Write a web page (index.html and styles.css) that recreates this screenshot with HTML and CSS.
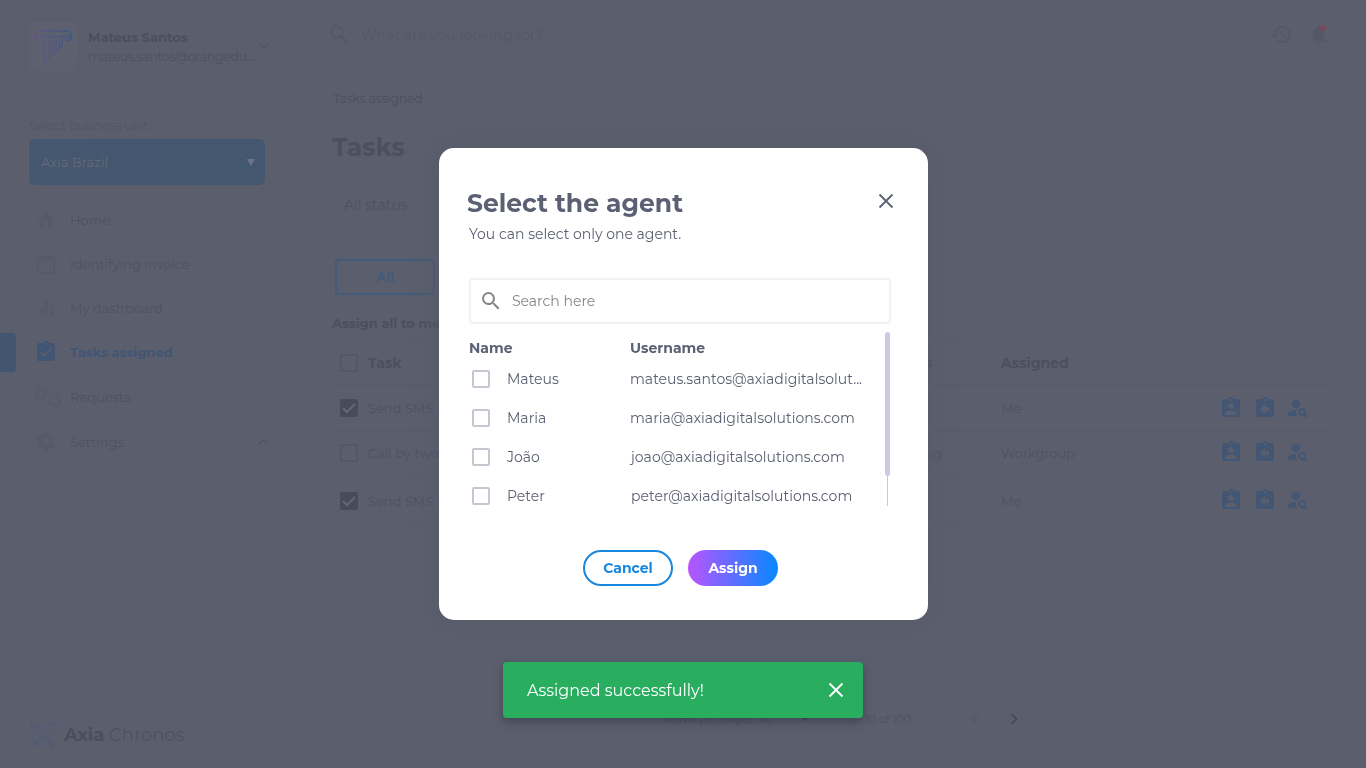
FILE: index.html
```html
<!DOCTYPE html>
<html lang="en">
<head>
<meta charset="utf-8">
<title>Axia Chronos - Tasks</title>
<link rel="stylesheet" href="styles.css">
</head>
<body>
<svg class="defs" width="0" height="0" aria-hidden="true">
  <defs>
    <linearGradient id="brand" gradientUnits="userSpaceOnUse" x1="0" x2="38" y1="0" y2="0"><stop offset="0" stop-color="#67557f"/><stop offset="1" stop-color="#425b7c"/></linearGradient>
    <linearGradient id="blades" gradientUnits="userSpaceOnUse" x1="0" x2="0" y1="27" y2="0"><stop offset="0" stop-color="#455c7a"/><stop offset="1" stop-color="#555279"/></linearGradient>
    <symbol id="search" viewBox="0 0 24 24"><path d="M15.5 14h-.79l-.28-.27A6.47 6.47 0 0 0 16 9.5 6.5 6.5 0 1 0 9.5 16c1.61 0 3.09-.59 4.23-1.57l.27.28v.79l5 4.99L20.49 19l-4.99-5zm-6 0C7.01 14 5 11.99 5 9.5S7.01 5 9.5 5 14 7.01 14 9.5 11.99 14 9.5 14z"/></symbol>
    <symbol id="close" viewBox="0 0 24 24"><path d="m5.500 5.500 13 13m0-13-13 13" fill="none" stroke="currentColor" stroke-width="1.800"/></symbol>
    <symbol id="profile-board" viewBox="0 0 24 24"><path d="M19 3h-4.180C14.400 1.840 13.300 1 12 1s-2.400.840-2.820 2H5c-1.100 0-2 .900-2 2v14c0 1.100.900 2 2 2h14c1.100 0 2-.900 2-2V5c0-1.100-.900-2-2-2zm-7 0c.550 0 1 .450 1 1s-.450 1-1 1-1-.450-1-1 .450-1 1-1zm0 4c1.660 0 3 1.340 3 3s-1.340 3-3 3-3-1.340-3-3 1.340-3 3-3zm6 12H6v-1.400c0-2 4-3.100 6-3.100s6 1.100 6 3.100V19z"/></symbol>
    <symbol id="return-board" viewBox="0 0 24 24"><path d="M19 3h-4.180C14.400 1.840 13.300 1 12 1s-2.400.840-2.820 2H5c-1.100 0-2 .900-2 2v14c0 1.100.900 2 2 2h14c1.100 0 2-.900 2-2V5c0-1.100-.900-2-2-2zm-7 0c.550 0 1 .450 1 1s-.450 1-1 1-1-.450-1-1 .450-1 1-1zm4 12h-4v3l-5-5 5-5v3h4v4z"/></symbol>
    <symbol id="person-search" viewBox="0 0 24 24"><circle cx="10" cy="8" r="4"/><path d="M10.350 14.010C7.620 13.910 2 15.270 2 18v2h9.540c-2.470-2.760-1.230-5.890-1.190-5.990zM19.430 18.020C19.790 17.430 20 16.740 20 16c0-2.210-1.790-4-4-4s-4 1.790-4 4 1.790 4 4 4c.740 0 1.430-.220 2.020-.570L20.590 22 22 20.590l-2.570-2.570zM16 18c-1.100 0-2-.900-2-2s.900-2 2-2 2 .900 2 2-.900 2-2 2z"/></symbol>
    <symbol id="row-check" viewBox="0 0 18 18"><path d="m3 9 4 4 8-8" fill="none" stroke="currentColor" stroke-width="2"/></symbol>
  </defs>
</svg>
<div class="app">
  <aside class="sidebar">
    <div class="profile">
      <div class="avatar">
        <svg width="40" height="34" viewBox="0 0 40 34"><g fill="none" stroke="url(#brand)" stroke-width="1.800" stroke-linejoin="round"><path d="M8 10.500a2.600 2.600 0 1 1-1.300-4.200c1.800.6 2.400 2.700 1.300 4.200C6 13.200 1.500 11.300 1.500 7.300 1.500 4 4 2 7 2h26c3 0 5.500 2 5.500 5.300 0 4-4.500 5.900-6.500 3.200-1.100-1.500-.5-3.600 1.300-4.200a2.600 2.600 0 1 1-1.300 4.200"/><path d="M8.500 7.500h23M11.500 12v21l5-4.500V14c0-2.500 3-2.500 3 0v11.500l3.500-3V14c0-2.500 3-2.500 3 0v6l3-3V9.500"/></g></svg>
      </div>
      <div class="who"><div class="who-name">Mateus Santos</div><div class="who-mail">mateus.santos@orangedu...</div></div>
      <svg class="who-arrow" width="10" height="8" viewBox="0 0 10 8"><path d="m1 1.500 4 4 4-4"/></svg>
    </div>
    <label class="unit-label">Select business unit</label>
    <div class="unit"><span>Axia Brazil</span><i></i></div>
    <nav class="nav">
      <a class="home"><svg width="22" height="22" viewBox="0 0 24 24"><path d="M10 20v-6h4v6h5v-8h3L12 3 2 12h3v8z"/></svg><span>Home</span></a>
      <a class="invoice"><svg width="24" height="24" viewBox="0 0 24 24"><path d="M19 4h-1V2h-2v2H8V2H6v2H5c-1.100 0-2 .9-2 2v14c0 1.100.9 2 2 2h14c1.100 0 2-.9 2-2V6c0-1.100-.9-2-2-2zm0 16H5V9h14v11zM7 11h2v2H7zm4 0h2v2h-2zm4 0h2v2h-2z"/></svg><span>Identifying invoice</span></a>
      <a class="dash"><svg width="22" height="22" viewBox="0 0 24 24"><path d="M4 12h4v8H4zM10 4h4v16h-4zM16 9h4v11h-4z"/></svg><span>My dashboard</span></a>
      <a class="active"><svg width="24" height="24" viewBox="0 0 24 24"><path d="M19 3h-4.180C14.400 1.840 13.300 1 12 1s-2.400.84-2.820 2H5c-1.100 0-2 .9-2 2v14c0 1.100.9 2 2 2h14c1.100 0 2-.9 2-2V5c0-1.100-.9-2-2-2zm-7 0c.55 0 1 .45 1 1s-.45 1-1 1-1-.45-1-1 .45-1 1-1z"/><path class="tick" d="m7 12.500 3.300 3.300L17.500 8.500"/></svg><span>Tasks assigned</span></a>
      <a class="requests"><svg class="wide" width="26" height="24" viewBox="0 0 26 24" fill="none" stroke="currentColor" stroke-width="1.700"><path d="M1.500 4.500 5.500 1v3.500h6.500l-3 8H1.500zM24.500 19.500l-4 3.500v-3.500H14l3-8h7.500z"/></svg><span>Requests</span></a>
      <a class="settings"><svg width="24" height="24" viewBox="0 0 24 24"><path d="M19.140 12.940c.04-.3.060-.61.060-.94 0-.32-.02-.64-.07-.94l2.030-1.580a.49.49 0 0 0 .12-.61l-1.920-3.320a.49.49 0 0 0-.59-.22l-2.390.96c-.5-.38-1.030-.7-1.620-.94l-.36-2.540a.48.48 0 0 0-.48-.41h-3.840a.47.47 0 0 0-.47.41l-.36 2.540c-.59.24-1.130.57-1.620.94l-2.390-.96a.48.48 0 0 0-.59.22L2.740 8.870a.47.47 0 0 0 .12.610l2.030 1.580a6.500 6.500 0 0 0 0 1.880l-2.030 1.580a.49.49 0 0 0-.12.610l1.920 3.320c.12.220.37.290.59.220l2.390-.96c.5.380 1.030.700 1.620.940l.36 2.540c.05.240.24.410.48.410h3.840c.24 0 .44-.17.470-.41l.36-2.540c.59-.24 1.130-.56 1.620-.94l2.390.96c.22.080.47 0 .59-.22l1.920-3.320a.47.47 0 0 0-.12-.61zM12 15.600A3.600 3.600 0 1 1 12 8.400a3.600 3.600 0 0 1 0 7.200z"/></svg><span>Settings</span><svg class="up" width="10" height="8" viewBox="0 0 10 8"><path d="m1 6 4-4 4 4"/></svg></a>
    </nav>
    <div class="brand">
      <svg width="27" height="27" viewBox="0 0 27 27"><path fill="none" stroke="url(#blades)" stroke-width=".9" d="m1 1 7 1 5 5M1 1l2 7 14 12M8 4l12 13M4 4l14 14M26 1l-7 1-5 5M26 1l-2 7-6 5M23 4l-7 7M11 14l-5 5M13 16l-4 4M3 17l7 7M20 16l-5 5M24 17l-7 7M18 20l6 5M20 19l5 5M9 20l-6 5M7 19l-5 5M1 23l3 3M26 23l-3 3"/></svg>
      <span><b>Axia</b> Chronos</span>
    </div>
  </aside>
  <main class="main">
    <header class="topbar">
      <div class="top-search"><svg width="25" height="25"><use href="#search"/></svg><span>What are you looking for?</span></div>
      <svg class="history" width="21" height="21" viewBox="1 2 22 20"><path d="M13 3a9 9 0 0 0-9 9H1l3.890 3.890.070.140L9 12H6c0-3.870 3.130-7 7-7s7 3.130 7 7-3.130 7-7 7c-1.930 0-3.680-.79-4.940-2.060l-1.420 1.420A9 9 0 1 0 13 3zm-1 5v5l4.280 2.540.72-1.210-3.500-2.080V8z"/></svg>
      <div class="bell"><svg width="23" height="23" viewBox="0 0 24 24"><path d="M12 22c1.100 0 2-.9 2-2h-4c0 1.100.9 2 2 2zm6-6v-5c0-3.070-1.630-5.640-4.500-6.320V4a1.500 1.500 0 0 0-3 0v.68C7.640 5.360 6 7.920 6 11v5l-2 2v1h16v-1z"/></svg><i></i></div>
    </header>
    <div class="crumb">Tasks assigned</div>
    <h1>Tasks</h1>
    <div class="status-filter">All status</div>
    <button class="tab">All</button>
    <div class="assign-all">Assign all to me</div>
    <section class="table">
      <div class="row head"><i class="box"></i><span class="task">Task</span><span>Status</span><span>Assigned</span></div>
      <div class="row r1"><i class="box on"><svg><use href="#row-check"/></svg></i><span class="task">Send SMS reminder</span><span>Open</span><span>Me</span><div class="acts"><svg><use href="#profile-board"/></svg><svg><use href="#return-board"/></svg><svg><use href="#person-search"/></svg></div></div>
      <div class="row r2"><i class="box"></i><span class="task">Call by two</span><span>Pending</span><span>Workgroup</span><div class="acts"><svg><use href="#profile-board"/></svg><svg><use href="#return-board"/></svg><svg><use href="#person-search"/></svg></div></div>
      <div class="row r3"><i class="box on"><svg><use href="#row-check"/></svg></i><span class="task">Send SMS reminder</span><span>Open</span><span>Me</span><div class="acts"><svg><use href="#profile-board"/></svg><svg><use href="#return-board"/></svg><svg><use href="#person-search"/></svg></div></div>
    </section>
    <footer class="pager"><span class="per">Items per page:</span><span class="count">10</span><i></i><span class="range">1 - 10 of 100</span><svg class="prev" width="8" height="12" viewBox="0 0 8 12"><path d="M6.500 1 1.500 6l5 5"/></svg><svg class="next" width="8" height="12" viewBox="0 0 8 12"><path d="m1.500 1 5 5-5 5"/></svg></footer>
  </main>
</div>
<div class="overlay">
  <div class="modal" role="dialog">
    <div class="modal-head"><div><h2>Select the agent</h2><p>You can select only one agent.</p></div><svg class="x" width="24" height="24"><use href="#close"/></svg></div>
    <div class="field"><svg width="24" height="24"><use href="#search"/></svg><span>Search here</span></div>
    <div class="agents">
      <div class="list">
        <div class="agent titles"><b>Name</b><b>Username</b></div>
        <div class="agent"><i></i><span>Mateus</span><span>mateus.santos@axiadigitalsolut...</span></div>
        <div class="agent"><i></i><span>Maria</span><span>maria@axiadigitalsolutions.com</span></div>
        <div class="agent"><i></i><span>João</span><span class="inset">joao@axiadigitalsolutions.com</span></div>
        <div class="agent"><i></i><span>Peter</span><span class="inset">peter@axiadigitalsolutions.com</span></div>
      </div>
      <div class="scroll"><div class="thumb"></div><div class="track"></div></div>
    </div>
    <div class="buttons"><button class="cancel">Cancel</button><button class="assign">Assign</button></div>
  </div>
</div>
<div class="toast"><span>Assigned successfully!</span><svg width="24" height="24"><use href="#close"/></svg></div>
</body>
</html>
```
FILE: styles.css
```css
* { box-sizing: border-box; }
body { margin: 0; width: 1366px; height: 768px; overflow: hidden; background: #5b5f6d; font-family: "Montserrat", "Inter", sans-serif; font-size: 14px; color: #4c4f5e; }
h1, h2, p { margin: 0; }
button { font-family: inherit; padding: 0; }
svg { display: block; flex: none; fill: currentColor; }
.defs { position: absolute; }
.app { display: flex; height: 768px; }
.sidebar { width: 294px; padding: 22px 28px 0 29px; border-right: 1px solid #565a69; display: flex; flex-direction: column; }
.profile { display: flex; height: 71px; border-bottom: 1px dashed #555968; margin-right: -1px; }
.avatar { flex: none; width: 49px; height: 49px; margin-left: -1px; border-radius: 5px; background: #5d616f; box-shadow: 0 0 5px #585c6b; display: flex; justify-content: center; padding-top: 7px; }
.who { margin-left: 11px; padding-top: 5px; width: 170px; flex: none; white-space: nowrap; }
.who-name { font-size: 13px; font-weight: 700; line-height: 20px; }
.who-mail { font-size: 12.5px; letter-spacing: -.28px; line-height: 20px; color: #4d505f; }
.who-arrow, .up { fill: none; stroke: currentColor; stroke-width: 1.3; }
.who-arrow { margin: 21px 0 0 1px; color: #505362; }
.unit-label { margin-top: 23px; height: 23px; line-height: 20px; font-size: 12.5px; letter-spacing: -.26px; color: #525564; }
.unit { width: 236px; height: 46px; border-radius: 5px; background: linear-gradient(90deg, #465770, #43576f); padding: 0 10px 0 12px; display: flex; align-items: center; justify-content: space-between; color: #666a78; font-size: 13px; letter-spacing: .1px; }
.unit i { border: 4px solid transparent; border-top: 7px solid #6d7483; border-bottom: 0; }
.nav { margin-top: 13px; display: flex; flex-direction: column; font-size: 13px; }
.nav a { height: 44px; display: flex; align-items: center; color: #565a6a; }
.nav a > svg:first-child { width: 24px; margin-left: 5px; }
.nav span { margin-left: 12px; color: #4e5160; }
.nav .active { color: #415675; position: relative; font-weight: 700; }
.nav .active span { color: #415675; }
.nav .active::before { content: ""; position: absolute; left: -29px; top: 3px; width: 16px; height: 39px; border-radius: 0 4px 4px 0; background: #425671; }
.tick { fill: none; stroke: #5b5f6d; stroke-width: 1.8; }
.nav .requests { height: 46px; }
.nav a > svg.wide { width: 26px; fill: none; margin-left: 6px; }
.nav .requests span { margin-left: 9px; }
.nav .up { margin-left: auto; margin-right: -3px; color: #505362; }
.brand { margin-top: auto; margin-bottom: 19px; display: flex; align-items: center; gap: 8px; font-size: 18px; line-height: 27px; color: #4e5160; }
.brand span { padding-top: 1px; }
.brand b { font-weight: 700; color: #4b4e5d; }
.main { width: 1072px; padding-left: 38px; display: flex; flex-direction: column; align-items: flex-start; }
.topbar { width: 100%; height: 69px; display: flex; align-items: center; padding-right: 36px; color: #545868; }
.top-search { display: flex; align-items: center; flex: 1; margin-left: -5px; gap: 9px; color: #555867; font-size: 14px; letter-spacing: .08px; }
.history { margin-right: 15px; }
.bell { position: relative; }
.bell i { position: absolute; left: 13px; top: 2px; width: 6px; height: 6px; border-radius: 50%; background: #80465a; }
.crumb { margin: 20px 0 0 1px; line-height: 20px; font-size: 12.5px; letter-spacing: -.25px; color: #4c4f5e; }
h1 { margin-top: 20px; font-size: 25px; line-height: 36px; }
.status-filter { margin: 30px 0 0 12px; height: 20px; line-height: 20px; font-size: 14px; color: #4e5160; }
.tab { margin: 44px 0 0 3px; width: 100px; height: 36px; border: 2px solid #435b78; border-radius: 4px; background: transparent; color: #435b78; font-size: 14px; font-weight: 700; }
.assign-all { margin-top: 18px; line-height: 20px; font-size: 13px; font-weight: 700; }
.table { width: 996px; margin-top: 7px; border-top: 1px solid #565a69; }
.row { display: grid; grid-template-columns: 36px 518px 115px 221px auto; align-items: center; border-bottom: 1px solid #565a69; font-size: 13px; height: 45px; color: #4e5160; }
.row.head { font-weight: 700; font-size: 14px; color: #4c4f5e; }
.row.r2 { height: 46px; padding-bottom: 2px; }
.row.r3 { height: 47px; padding-top: 1px; }
.box { width: 18px; height: 18px; margin-left: 8px; border: 2px solid #545766; border-radius: 2px; }
.box.on { background: #474b5a; border: 0; color: #646876; }
.box svg { width: 18px; height: 18px; }
.acts { display: flex; gap: 10px; margin-top: -1px; color: #435674; }
.acts svg { width: 24px; height: 24px; }
.acts svg:last-child { margin-left: -1px; }
.acts svg:first-child { margin-left: -3px; }
.pager { margin: auto 0 40px 333px; display: flex; align-items: center; font-size: 11px; line-height: 18px; height: 18px; white-space: nowrap; color: #4d505f; }
.per { width: 96px; }
.count { width: 40px; }
.pager i { border: 4px solid transparent; border-top: 4px solid #474b5a; border-bottom: 0; }
.range { margin-left: 42px; width: 62px; }
.pager svg { fill: none; stroke: #474b5a; stroke-width: 1.8; }
.pager .prev { margin-left: 58px; stroke: #555968; }
.pager .next { margin-left: 31px; }
.overlay { position: fixed; inset: 0; display: flex; align-items: center; justify-content: center; }
.modal { width: 489px; height: 472px; margin-left: 1px; border-radius: 15px; background: #fff; color: #5b6072; padding: 38px 28px 0; box-shadow: 0 0 24px #565a69; }
.modal-head { display: flex; justify-content: space-between; height: 92px; }
.modal-head h2 { font-size: 25px; line-height: 34px; white-space: nowrap; }
.modal-head p { margin: 4px 0 0 2px; line-height: 20px; font-size: 14px; }
.x { margin: 3px 2px 0 0; }
.field { width: 422px; height: 46px; margin-left: 2px; border: 2px solid #f1f1f6; border-radius: 4px; display: flex; align-items: center; padding-left: 8px; gap: 9px; color: #858689; }
.agents { display: flex; justify-content: space-between; height: 174px; margin: 8px 10px 0 2px; }
.list { width: 400px; }
.agent { display: grid; grid-template-columns: 38px 123px 1fr; height: 39px; align-items: center; font-size: 14px; white-space: nowrap; }
.agent span:last-child { letter-spacing: .02px; }
.agent.titles { grid-template-columns: 161px 1fr; height: 27px; padding-top: 5px; }
.agent b { font-weight: 700; }
.agent i { width: 18px; height: 18px; margin-left: 3px; border: 2px solid #c6c7d2; border-radius: 2px; }
.agent .inset { padding-left: 1px; }
.scroll { width: 5px; display: flex; flex-direction: column; align-items: center; }
.thumb { width: 5px; height: 144px; border-radius: 3px; background: #cacde0; }
.track { width: 1px; flex: 1; background: #c6c8d5; }
.buttons { display: flex; gap: 15px; margin: 44px 0 0 116px; }
.buttons button { width: 90px; height: 36px; border-radius: 18px; font-size: 14px; font-weight: 700; }
.cancel { border: 2px solid #1787e0; background: #fff; color: #1787e0; }
.assign { border: 0; background: linear-gradient(90deg, #b854ff, #0788ff); color: #fff; }
.toast { position: fixed; left: 503px; bottom: 50px; width: 360px; height: 56px; border-radius: 4px; background: #29ae60; color: #fff; display: flex; align-items: center; justify-content: space-between; padding: 0 15px 0 24px; font-size: 16px; box-shadow: 0 4px 10px rgba(40, 44, 60, .5); }
```
